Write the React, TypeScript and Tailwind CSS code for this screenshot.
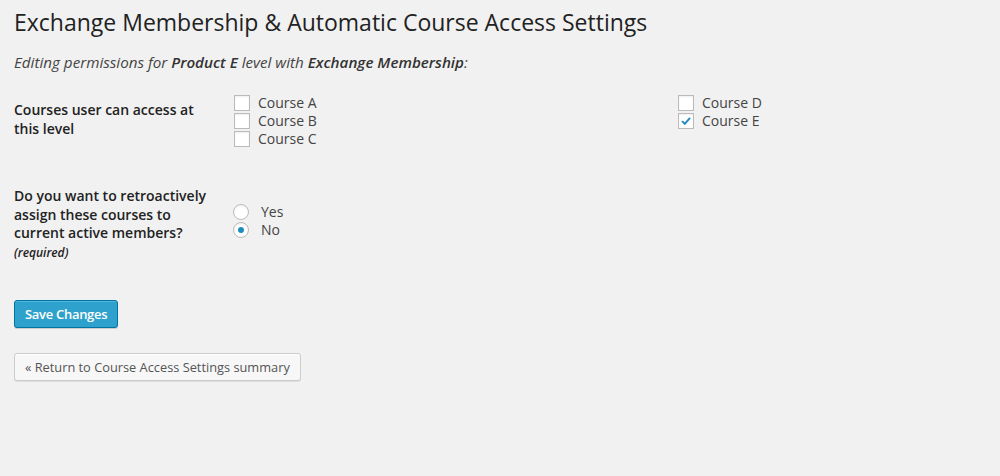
import React from 'react';

const courses = [
    { name: 'Course A', checked: false },
    { name: 'Course D', checked: false },
    { name: 'Course B', checked: false },
    { name: 'Course E', checked: true },
    { name: 'Course C', checked: false },
];

function Checkbox({ checked }: { checked: boolean }) {
    return (
        <span className="flex h-4 w-4 shrink-0 items-center justify-center border border-[#bbb] bg-white shadow-[inset_0_1px_2px_rgba(0,0,0,0.07)]">
            {checked && (
                <svg viewBox="0 0 16 16" className="h-[14px] w-[14px]">
                    <path d="M3.5 8.2 L6.6 11.2 L12.6 4.3" fill="none" stroke="#1e8cbe" strokeWidth="2.2" />
                </svg>
            )}
        </span>
    );
}

function Radio({ checked }: { checked: boolean }) {
    return (
        <span className="flex h-4 w-4 shrink-0 items-center justify-center rounded-full border border-[#bbb] bg-white shadow-[inset_0_1px_2px_rgba(0,0,0,0.07)]">
            {checked && <span className="h-[6px] w-[6px] rounded-full bg-[#1e8cbe]" />}
        </span>
    );
}

export default function App() {
    return (
        <div className="min-h-[476px] bg-[#f1f1f1] pl-[14px] pr-5 font-['Open_Sans',sans-serif] text-[14px] text-[#444]">
            <h2 className="pt-[8px] pb-[4px] text-[23px] leading-[29px] text-[#222]">
                Exchange Membership &amp; Automatic Course Access Settings
            </h2>

            <p className="mt-[11px] text-[15.2px] italic leading-[20px] text-[#444]">
                Editing permissions for <span className="font-semibold text-[#333]">Product E</span> level with{' '}
                <span className="font-semibold text-[#333]">Exchange Membership</span>:
            </p>

            <div className="mt-[23px] flex">
                <div className="w-[220px] pt-[5px] pr-[20px] font-semibold leading-[19px] text-[#222]">
                    Courses user can access at this level
                </div>
                <div className="grid grid-cols-[444px_300px] gap-y-[2px]">
                    {courses.map(c => (
                        <label key={c.name} className="flex h-4 items-center gap-2 leading-4">
                            <Checkbox checked={c.checked} />
                            <span>{c.name}</span>
                        </label>
                    ))}
                </div>
            </div>

            <div className="mt-[40px] flex">
                <div className="w-[220px] pr-[10px] font-semibold leading-[18.5px] text-[#222]">
                    Do you want to retroactively assign these courses to current active members?
                    <div className="mt-[2px] text-[12px] italic leading-[16px]">(required)</div>
                </div>
                <div className="-ml-[1px] flex flex-col gap-[2px] pt-[17px]">
                    <label className="flex h-4 items-center gap-3 leading-4">
                        <Radio checked={false} />
                        <span>Yes</span>
                    </label>
                    <label className="flex h-4 items-center gap-3 leading-4">
                        <Radio checked={true} />
                        <span>No</span>
                    </label>
                </div>
            </div>

            <div className="mt-[39px]">
                <button className="h-[28px] rounded-[3px] border border-[#0074a2] bg-[#2ea2cc] px-[10px] text-[13px] font-semibold leading-[26px] tracking-[-0.3px] text-white shadow-[inset_0_1px_0_rgba(120,200,230,0.5),0_1px_0_rgba(0,0,0,0.15)]">
                    Save Changes
                </button>
            </div>

            <div className="mt-[25px]">
                <button className="h-[28px] rounded-[3px] border border-[#ccc] bg-[#f7f7f7] px-[10px] text-[12.8px] leading-[26px] text-[#555] shadow-[inset_0_1px_0_#fff,0_1px_0_rgba(0,0,0,0.08)]">
                    <span className="text-[#555]">«</span> Return to Course Access Settings summary
                </button>
            </div>
        </div>
    );
}
